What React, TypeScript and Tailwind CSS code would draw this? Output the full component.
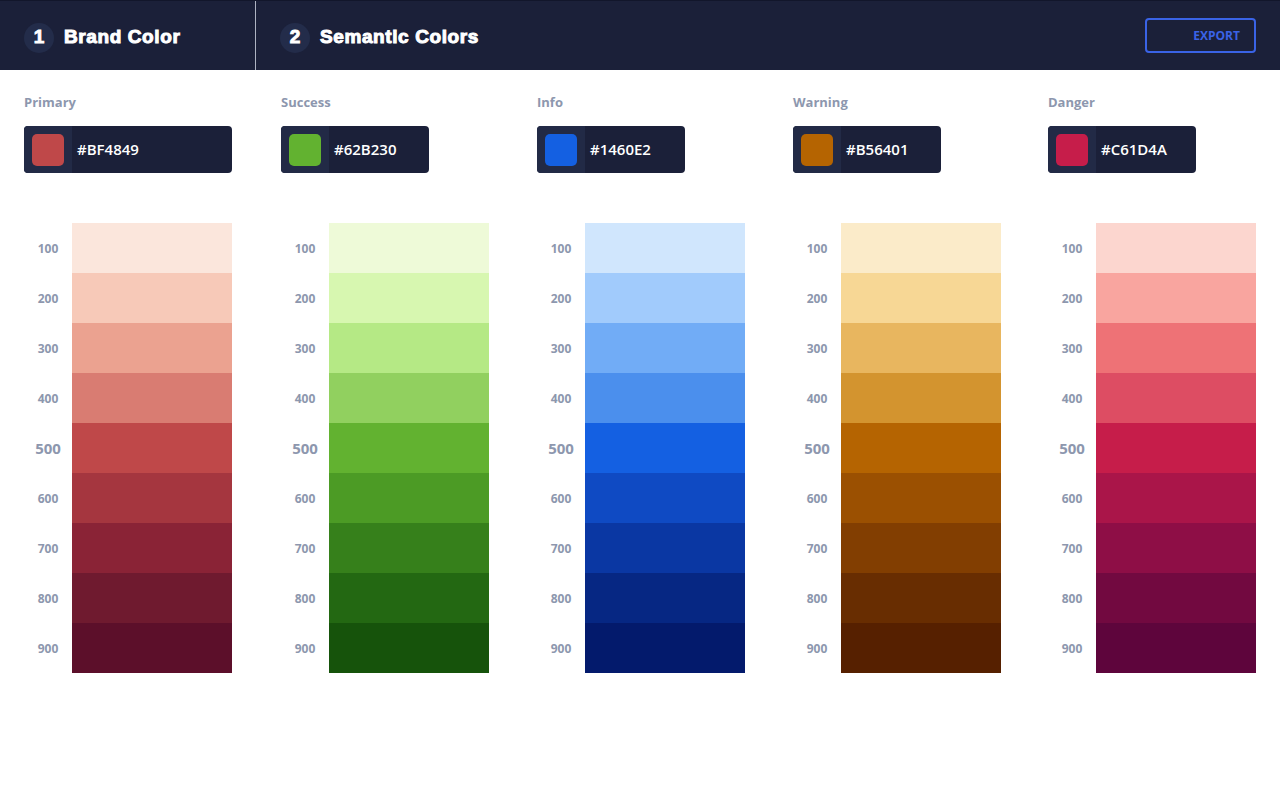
import React from "react";

type Palette = {
  name: string;
  hex: string;
  shades: string[];
};

const palettes: Palette[] = [
  {
    name: "Primary",
    hex: "#BF4849",
    shades: ["#fbe6dc", "#f7c9b8", "#eba290", "#d97c72", "#bf4849", "#a5363f", "#8a2336", "#6f1a2f", "#5c0f2a"],
  },
  {
    name: "Success",
    hex: "#62B230",
    shades: ["#eefad8", "#d7f7b0", "#b5e985", "#91d05f", "#62b230", "#4c9b25", "#36801b", "#236812", "#16530b"],
  },
  {
    name: "Info",
    hex: "#1460E2",
    shades: ["#d0e6fd", "#a1cbfc", "#71acf6", "#4b8fed", "#1460e2", "#0f4ac3", "#0a37a3", "#062783", "#031a6c"],
  },
  {
    name: "Warning",
    hex: "#B56401",
    shades: ["#fbebc9", "#f7d795", "#e8b65f", "#d3942f", "#b56401", "#9b5001", "#823e01", "#682d01", "#562000"],
  },
  {
    name: "Danger",
    hex: "#C61D4A",
    shades: ["#fcd6cf", "#f9a59f", "#ee7276", "#dd4d63", "#c61d4a", "#aa1549", "#8e0e46", "#720940", "#5e053c"],
  },
];

const steps = [100, 200, 300, 400, 500, 600, 700, 800, 900];

function StepTitle({ n, title }: { n: number; title: string }) {
  return (
    <div className="flex items-center gap-[10px] pt-[4px]">
      <div className="w-[30px] h-[30px] rounded-full bg-[#232c4a] flex items-center justify-center text-white text-[19px] font-bold font-['Liberation_Sans',sans-serif] [-webkit-text-stroke:0.9px_white]">
        {n}
      </div>
      <span className="text-white text-[19px] font-bold font-['Liberation_Sans',sans-serif] tracking-[0.6px] [-webkit-text-stroke:1px_white]">
        {title}
      </span>
    </div>
  );
}

function ColorColumn({ palette, index }: { palette: Palette; index: number }) {
  const wide = index === 0;
  const shifted = index > 0 && index < 4;
  return (
    <div className={`pt-6 ${shifted ? "pl-[25px] pr-[23px]" : "px-6"}`}>
      <div className="text-[13px] leading-4 font-bold text-[#8d97ae]">{palette.name}</div>
      <div
        className={`mt-4 h-[47px] rounded-[4px] bg-[#1b2039] flex overflow-hidden ${
          wide ? "w-[208px]" : "w-[148px]"
        }`}
      >
        <div className="w-12 h-full bg-[#222a46] flex items-center justify-center">
          <div className="w-8 h-8 rounded-[5px]" style={{ backgroundColor: palette.hex }} />
        </div>
        <div className="flex items-center pl-[5px] text-white text-[15px] font-semibold">{palette.hex}</div>
      </div>

      <div className="mt-[50px] flex flex-col">
        {steps.map((step, i) => (
          <div key={step} className="flex h-[50px]">
            <div
              className={`w-12 flex items-center justify-center pt-[1px] font-bold text-[#8d97ae] ${
                step === 500 ? "text-[15px]" : "text-[12px]"
              }`}
            >
              {step}
            </div>
            <div className="w-[160px] h-full" style={{ backgroundColor: palette.shades[i] }} />
          </div>
        ))}
      </div>
    </div>
  );
}

export default function App() {
  return (
    <div className="min-h-[811px] bg-white font-['Open_Sans',sans-serif]">
      <header className="h-[70px] bg-[#1b2039] border-t border-[#12162b] flex">
        <div className="w-[256px] border-r border-[#aeb3c2] pl-6 flex items-center">
          <StepTitle n={1} title="Brand Color" />
        </div>
        <div className="flex-1 pl-6 pr-6 flex items-center justify-between">
          <StepTitle n={2} title="Semantic Colors" />
          <button className="w-[111px] h-[35px] rounded-[4px] border-2 border-[#3a63e6] flex items-center justify-end pr-[14px] text-[12px] font-bold text-[#3a63e6]">
            EXPORT
          </button>
        </div>
      </header>

      <div className="grid grid-cols-5">
        {palettes.map((p, i) => (
          <ColorColumn key={p.name} palette={p} index={i} />
        ))}
      </div>
    </div>
  );
}
